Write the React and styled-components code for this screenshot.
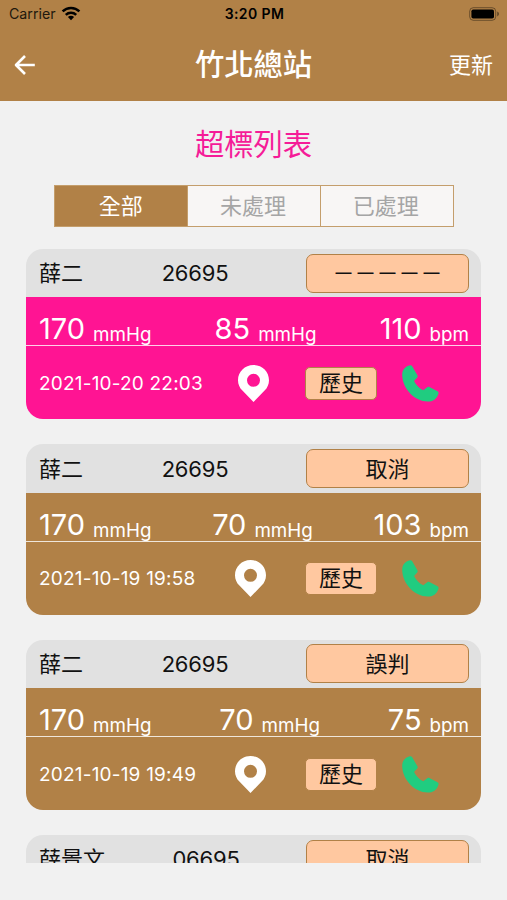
import styled, { createGlobalStyle } from "styled-components";

const GlobalStyle = createGlobalStyle`
	* {
		box-sizing: border-box;
	}
	body {
		margin: 0;
		background: #f1f1f1;
		font-family: Inter, "Noto Sans CJK TC", sans-serif;
	}
	button {
		margin: 0;
		padding: 0;
		border: none;
		background: none;
		font-family: inherit;
	}
`;

const tabs = ["全部", "未處理", "已處理"];

const records = [
	{
		id: 1,
		name: "薛二",
		code: "26695",
		status: "－－－－－",
		pressure: ["170", "85"],
		pulse: "110",
		time: "2021-10-20 22:03",
		alert: true,
	},
	{
		id: 2,
		name: "薛二",
		code: "26695",
		status: "取消",
		pressure: ["170", "70"],
		pulse: "103",
		time: "2021-10-19 19:58",
	},
	{
		id: 3,
		name: "薛二",
		code: "26695",
		status: "誤判",
		pressure: ["170", "70"],
		pulse: "75",
		time: "2021-10-19 19:49",
	},
	{
		id: 4,
		name: "薛景文",
		code: "06695",
		status: "取消",
		pressure: ["170", "70"],
		pulse: "75",
		time: "2021-10-19 19:49",
	},
];

const WifiIcon = () => (
	<svg width="20" height="15" viewBox="0 0 20 15">
		<g fill="none" stroke="#000" strokeWidth="2.5">
			<path d="M1.6 5.4a12 12 0 0 1 16.8 0" />
			<path d="M4.8 8.8a7.4 7.4 0 0 1 10.4 0" />
		</g>
		<path d="M10 14.2 6.9 11a4.4 4.4 0 0 1 6.2 0z" />
	</svg>
);

const BatteryIcon = () => (
	<svg width="31" height="14" viewBox="0 0 31 14">
		<rect x="0.7" y="0.7" width="26" height="12.6" rx="3.6" fill="none" stroke="#000" strokeOpacity="0.4" />
		<rect x="2.4" y="2.4" width="22.6" height="9.2" rx="1.8" />
		<path d="M28.2 4.6c2.4 1 2.4 3.8 0 4.8z" fillOpacity="0.45" />
	</svg>
);

const BackIcon = () => (
	<svg width="22" height="20" viewBox="0 0 22 20" fill="none" stroke="#fff" strokeWidth="2.6">
		<path d="M20.8 10H2M11 1 2 10l9 9" strokeLinejoin="round" />
	</svg>
);

const PinIcon = () => (
	<svg width="31" height="37" viewBox="0 0 31 37">
		<path
			fill="#fff"
			fillRule="evenodd"
			d="M15.5 0C24.2 0 31 6.7 31 15.2c0 3.9-1.6 7.6-4.4 10.4L15.5 37 4.4 25.6C1.6 22.8 0 19.1 0 15.2 0 6.7 6.8 0 15.5 0zm0 8.8a6.5 6.5 0 1 0 0 13 6.5 6.5 0 0 0 0-13z"
		/>
	</svg>
);

const PhoneIcon = () => (
	<svg width="37" height="37" viewBox="0 0 37 37">
		<path
			fill="#20cc80"
			d="M1.7 4.2C3.4 2 5.8.7 8 .3c1-.2 1.7.2 2.200 1l5.200 9c.5.9.4 1.500-.2 2.200l-3.100 3.500c2.100 4.200 5.300 7.400 9.200 9.300l4-3c.7-.5 1.300-.6 2.100-.2l8.100 4.100c1 .5 1.300 1.200 1 2.200-1.700 5.600-5.300 8.200-11 8.200C13.200 36.500.8 24.600.2 10.600.1 8 .6 5.700 1.700 4.200z"
		/>
	</svg>
);

const App = () => {
	return (
		<Screen>
			<GlobalStyle />
			<StatusBar>
				<Carrier>
					Carrier <WifiIcon />
				</Carrier>
				<Clock>3:20 PM</Clock>
				<BatteryIcon />
			</StatusBar>
			<Navbar>
				<NavButton>
					<BackIcon />
				</NavButton>
				<h1>竹北總站</h1>
				<NavButton>更新</NavButton>
			</Navbar>
			<ListTitle>超標列表</ListTitle>
			<Tabs>
				{tabs.map((tab, index) => (
					<Tab key={tab} $active={index === 0}>
						{tab}
					</Tab>
				))}
			</Tabs>
			<List>
				{records.map((record) => (
					<Card key={record.id}>
						<CardHeader>
							<Name>{record.name}</Name>
							<Code>{record.code}</Code>
							<StatusButton>{record.status}</StatusButton>
						</CardHeader>
						<CardBody $alert={record.alert}>
							<Readings>
								{record.pressure.map((value) => (
									<Reading key={value}>
										<Value>{value}</Value>
										<Unit>mmHg</Unit>
									</Reading>
								))}
								<Reading>
									<Value>{record.pulse}</Value>
									<Unit>bpm</Unit>
								</Reading>
							</Readings>
							<Actions>
								<Details>
									<Time>{record.time}</Time>
									<PinIcon />
									<HistoryButton>歷史</HistoryButton>
								</Details>
								<PhoneIcon />
							</Actions>
						</CardBody>
					</Card>
				))}
			</List>
		</Screen>
	);
};

const Screen = styled.main`
	height: 900px;
	display: flex;
	flex-direction: column;
	overflow: hidden;
`;

const StatusBar = styled.div`
	height: 28px;
	flex-shrink: 0;
	display: grid;
	grid-template-columns: 1fr auto 1fr;
	align-items: center;
	padding: 0 7px 1px 9px;
	background: #b18147;
	> svg {
		justify-self: end;
	}
`;

const Carrier = styled.span`
	display: flex;
	align-items: center;
	gap: 5px;
	font-size: 14.2px;
	color: #21180d;
`;

const Clock = styled.span`
	font-size: 14px;
	font-weight: 600;
	letter-spacing: 0.4px;
`;

const Navbar = styled.nav`
	height: 73px;
	flex-shrink: 0;
	display: grid;
	grid-template-columns: 1fr auto 1fr;
	align-items: center;
	padding: 0 14px;
	background: #b18147;
	color: #fff;
	h1 {
		margin: 0;
		font-size: 29.3px;
		line-height: 40px;
		font-weight: 500;
	}
`;

const NavButton = styled.button`
	display: flex;
	color: #fff;
	font-size: 22px;
	line-height: 32px;
	&:last-child {
		justify-self: end;
	}
`;

const ListTitle = styled.h2`
	margin: 23px 0 0;
	text-align: center;
	font-size: 29.3px;
	line-height: 42px;
	font-weight: 400;
	color: #f51c98;
`;

const Tabs = styled.div`
	width: 400px;
	height: 42px;
	flex-shrink: 0;
	display: grid;
	grid-template-columns: repeat(3, 1fr);
	margin: 19px auto 22px;
	border: 1px solid #c49e6c;
`;

const Tab = styled.button`
	padding-bottom: 4px;
	background: ${({ $active }) => ($active ? "#b18147" : "#f8f6f5")};
	color: ${({ $active }) => ($active ? "#fff" : "#a5a5a5")};
	font-size: 22px;
	& + & {
		padding-right: 2px;
		border-left: 1px solid #c49e6c;
	}
`;

const List = styled.div`
	height: 614px;
	flex-shrink: 0;
	display: flex;
	flex-direction: column;
	gap: 25px;
	padding: 0 26px;
	overflow: hidden;
`;

const Card = styled.article`
	height: 170.4px;
	flex-shrink: 0;
	display: flex;
	flex-direction: column;
	border-radius: 17px;
	overflow: hidden;
`;

const CardHeader = styled.header`
	height: 48.4px;
	display: flex;
	align-items: center;
	justify-content: space-between;
	padding: 0 12px 0 13px;
	background: #e1e1e1;
	color: #111;
	font-size: 22px;
`;

const Name = styled.span`
	padding-bottom: 4px;
`;

const Code = styled.span`
	margin-left: 1px;
	letter-spacing: -0.2px;
`;

const StatusButton = styled.button`
	width: 163px;
	height: 39px;
	padding-bottom: 4px;
	border: 1px solid #b18147;
	border-radius: 7px;
	background: #ffc8a0;
	color: #111;
	font-size: 22px;
`;

const CardBody = styled.div`
	flex: 1;
	background: ${({ $alert }) => ($alert ? "#ff1493" : "#b18147")};
	color: #fff;
`;

const Readings = styled.div`
	height: 49px;
	display: flex;
	align-items: flex-end;
	justify-content: space-between;
	padding: 0 12px 0 13px;
	border-bottom: 1px solid rgba(255, 255, 255, 0.8);
`;

const Reading = styled.div`
	display: flex;
	align-items: flex-end;
	gap: 8px;
`;

const Value = styled.span`
	font-size: 29px;
	line-height: 33px;
`;

const Unit = styled.span`
	font-size: 18.8px;
	line-height: 20px;
`;

const Actions = styled.div`
	height: 73px;
	display: flex;
	align-items: center;
	gap: 25px;
	padding: 1px 0 0 13px;
`;

const Details = styled.div`
	width: 338px;
	display: flex;
	align-items: center;
	justify-content: space-between;
`;

const Time = styled.time`
	font-size: 19px;
	letter-spacing: 0.2px;
`;

const HistoryButton = styled.button`
	width: 72px;
	height: 33px;
	padding-bottom: 1px;
	border: 1px solid #b18147;
	border-radius: 5px;
	background: #ffc8a0;
	color: #111;
	font-size: 22px;
	line-height: 22px;
`;

export default App;
